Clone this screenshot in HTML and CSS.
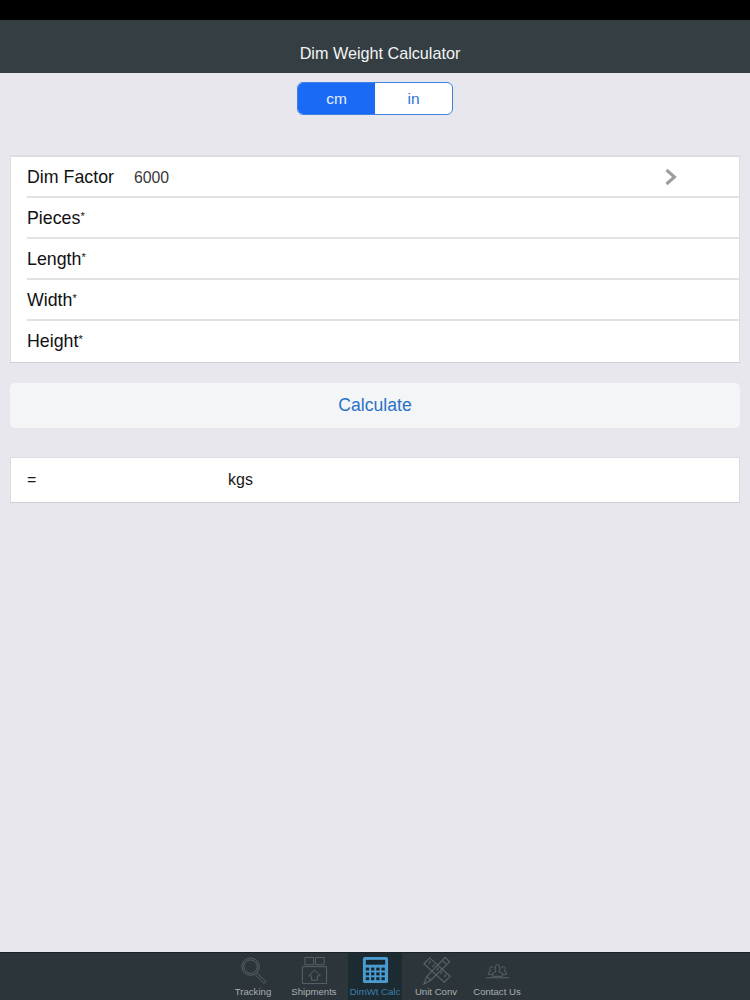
FILE: index.html
```html
<!DOCTYPE html>
<html lang="en">
<head>
	<meta charset="UTF-8">
	<title>Dim Weight Calculator</title>
	<link rel="stylesheet" href="styles.css">
</head>
<body>
<div class="wrap">
	<div class="status"></div>
	<div class="nav"><h1>Dim Weight Calculator</h1></div>
	<div class="main">
		<div class="seg">
			<span class="on">cm</span>
			<span>in</span>
		</div>
		<ul class="form">
			<li><label>Dim Factor</label><span class="val">6000</span>
				<svg class="arrow" width="14" height="18" viewBox="0 0 14 18"><path d="M2.5 2 L10.5 9 L2.5 16" fill="none" stroke="#9c9c9e" stroke-width="3"/></svg>
			</li>
			<li><label>Pieces<sup>*</sup></label></li>
			<li><label>Length<sup>*</sup></label></li>
			<li><label>Width<sup>*</sup></label></li>
			<li><label>Height<sup>*</sup></label></li>
		</ul>
		<div class="calc">Calculate</div>
		<div class="result"><span class="eq">=</span><span>kgs</span></div>
	</div>
	<div class="tabs">
		<div class="tab">
			<svg width="30" height="30" viewBox="0 0 30 30" fill="none" stroke="#5a6367" stroke-width="1"><circle cx="12" cy="11" r="9"/><circle cx="12" cy="11" r="7"/><path d="M18.5 17.5 L28 26.5 L26 28.5 L17 19.5"/></svg>
			<span>Tracking</span>
		</div>
		<div class="tab">
			<svg width="30" height="30" viewBox="0 0 30 30" fill="none" stroke="#5a6367" stroke-width="1"><path d="M5 1.5 H14 V9 H5 Z M16 1.5 H25 V9 H16 Z"/><path d="M2.5 11 H27.5 V28.5 H2.5 Z"/><path d="M15 14.5 L21 20.5 H18 V25 H12 V20.5 H9 Z"/></svg>
			<span>Shipments</span>
		</div>
		<div class="tab active">
			<svg width="30" height="30" viewBox="0 0 30 30"><rect x="2" y="1" width="26" height="27" rx="2" fill="#4b9ad0"/><rect x="5" y="4" width="20" height="5" fill="#16262e"/><g fill="#16262e"><rect x="5" y="12" width="3.4" height="3"/><rect x="10.4" y="12" width="3.4" height="3"/><rect x="15.8" y="12" width="3.4" height="3"/><rect x="21.2" y="12" width="3.4" height="3"/><rect x="5" y="17" width="3.4" height="3"/><rect x="10.4" y="17" width="3.4" height="3"/><rect x="15.8" y="17" width="3.4" height="3"/><rect x="21.2" y="17" width="3.4" height="3"/><rect x="5" y="22" width="3.4" height="3"/><rect x="10.4" y="22" width="3.4" height="3"/><rect x="15.8" y="22" width="3.4" height="3"/><rect x="21.2" y="22" width="3.4" height="3"/></g></svg>
			<span>DimWt Calc</span>
		</div>
		<div class="tab">
			<svg width="30" height="30" viewBox="0 0 30 30" fill="none" stroke="#5a6367" stroke-width="1.2"><path d="M2 8 L8 2 L29 21 L23 27 Z"/><path d="M9 5 L7 8 M13 8.5 L11 11.5 M17 12 L15 15 M21 15.5 L19 18.5 M25 19 L23 22"/><path d="M24 1.5 L28.5 6 L9 25 L2 29 L5 21 Z"/><path d="M5 21 L9 25 M21 4.5 L25.5 9"/></svg>
			<span>Unit Conv</span>
		</div>
		<div class="tab">
			<svg width="30" height="30" viewBox="0 0 30 30" fill="none" stroke="#5a6367" stroke-width="1"><path d="M12.5 13 Q12.5 9 15 9 Q17.5 9 17.5 13 Q17.5 15 16.5 16 L20 18 V21 H10 V18 L13.5 16 Q12.5 15 12.5 13 Z"/><path d="M10 19 H5.5 V17 L8 15.5 Q7 14.5 7 13 Q7 11 9 11 Q10.5 11 11 12.5"/><path d="M20 19 H24.5 V17 L22 15.5 Q23 14.5 23 13 Q23 11 21 11 Q19.5 11 19 12.5"/><path d="M3 22.5 H27"/></svg>
			<span>Contact Us</span>
		</div>
	</div>
</div>
</body>
</html>
```

FILE: styles.css
```css
*{
	margin: 0;
	padding: 0;
	box-sizing: border-box;
}
li{
	list-style: none;
}
body{
	font-family: "Liberation Sans", Arial, sans-serif;
	background: #e8e7ed;
}
.wrap{
	width: 750px;
	height: 1000px;
	display: flex;
	flex-direction: column;
	overflow: hidden;
}
.status{
	height: 20px;
	background: #000;
}
.nav{
	height: 53px;
	background: #353f43;
	display: flex;
	align-items: center;
	justify-content: center;
	padding: 14px 0 0 10px;
}
.nav h1{
	font-size: 16.2px;
	font-weight: normal;
	color: #f2f4f4;
}
.main{
	flex: 1;
	padding: 9px 10px 0;
	display: flex;
	flex-direction: column;
}
.seg{
	width: 156px;
	height: 33px;
	margin-left: 287px;
	display: flex;
	border: 1px solid #3f80e0;
	border-radius: 6px;
	overflow: hidden;
	background: #fff;
	font-size: 15.5px;
	color: #2a72d8;
}
.seg span{
	flex: 1;
	display: flex;
	align-items: center;
	justify-content: center;
}
.seg .on{
	background: #1a6af5;
	color: #e6effc;
}
.form{
	margin-top: 40px;
	width: 730px;
	background: #fff;
	border: 1px solid #dddde0;
	border-top-width: 2px;
	border-bottom: 1px solid #cfcfd3;
	padding-left: 16px;
}
.form li{
	height: 41px;
	padding-top: 2px;
	display: flex;
	align-items: center;
	border-bottom: 2px solid #e2e2e4;
	font-size: 17.8px;
	color: #111;
	position: relative;
}
.form li:last-child{
	border-bottom-color: transparent;
}
.form label{
	width: 107px;
}
.form sup{
	font-size: 11px;
	line-height: 0;
	vertical-align: 4px;
}
.val{
	font-size: 15.8px;
	color: #3a3a3a;
}
.arrow{
	position: absolute;
	left: 637px;
	top: 11px;
}
.calc{
	margin-top: 20px;
	height: 45px;
	padding-bottom: 1px;
	background: #f4f5f6;
	border-radius: 5px;
	font-size: 17.6px;
	color: #2a72c8;
	display: flex;
	align-items: center;
	justify-content: center;
}
.result{
	margin-top: 29px;
	height: 46px;
	background: #fff;
	border: 1px solid #dcdce0;
	border-bottom-color: #cfcfd3;
	display: flex;
	align-items: center;
	padding-left: 16px;
	font-size: 16px;
	color: #1a1a1a;
}
.eq{
	width: 201px;
}
.tabs{
	height: 48px;
	background: #2c353a;
	border-top: 1px solid #1c2226;
	display: flex;
	justify-content: center;
}
.tab{
	width: 61px;
	display: flex;
	flex-direction: column;
	align-items: center;
	justify-content: flex-end;
	font-size: 9.6px;
	color: #a9afb2;
	padding-bottom: 3px;
	white-space: nowrap;
}
.tab svg{
	margin-bottom: 1px;
	width: 29px;
	height: 29px;
}
.tab.active{
	width: 54px;
	margin: 0 3.5px;
	background: #1c2a32;
	color: #3f7fa8;
}
```
